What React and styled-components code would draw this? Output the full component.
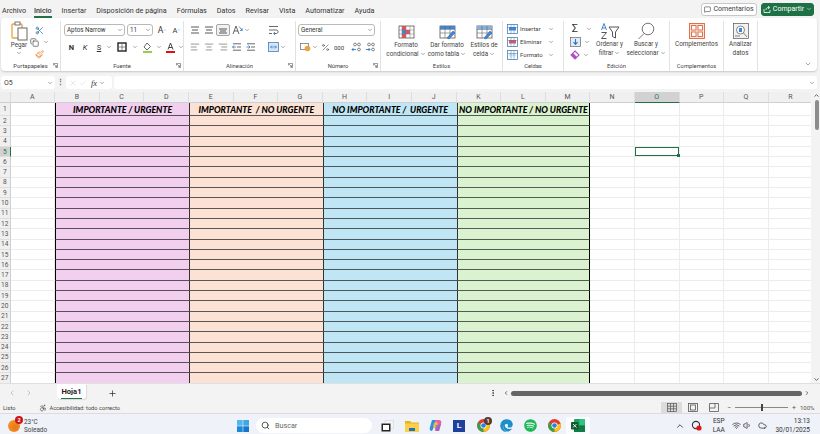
import React from 'react';
import styled, { createGlobalStyle } from 'styled-components';
import {
  ChevronDown, ChevronUp, ChevronLeft, ChevronRight, Plus, X, Check, Search,
  MessageSquare, Scissors, Copy, Paintbrush, AlignCenter, AlignLeft, AlignRight,
  Wifi, Volume1, Cloud, MoreVertical, Percent, Accessibility,
} from 'lucide-react';
import { FaSpotify, FaEdge } from 'react-icons/fa';

const GlobalStyle = createGlobalStyle`
  html, body { margin: 0; padding: 0; background: #f3f3f3; overflow: hidden; }
  * { box-sizing: border-box; }
  #root { width: 820px; height: 434px; }
`;

const Page = styled.div`
  width: 820px;
  height: 434px;
  display: flex;
  flex-direction: column;
  overflow: hidden;
  font-family: Roboto, "Noto Sans", sans-serif;
  color: #3b3b3b;
  background: #f3f3f3;
`;

const TopBar = styled.div`
  height: 18px;
  flex: none;
  display: flex;
  align-items: center;
  padding: 0 0 0 2px;
`;

const MenuItem = styled.div`
  font-size: 7.2px;
  margin-right: ${p => p.$gap || 10}px;
  height: 17px;
  line-height: 19px;
  color: #333;
  white-space: nowrap;
  border-bottom: ${p => (p.$active ? '2px solid #217346' : '2px solid transparent')};
  font-weight: ${p => (p.$active ? 500 : 400)};
`;

const TopActions = styled.div`
  margin-left: auto;
  display: flex;
  align-items: center;
  gap: 4px;
  padding-right: 6px;
`;

const CommentButton = styled.div`
  height: 13px;
  width: 56px;
  border: 1px solid #c8c8c8;
  border-radius: 3px;
  background: #fff;
  font-size: 7px;
  display: flex;
  align-items: center;
  justify-content: center;
  gap: 2px;
`;

const ShareButton = styled(CommentButton)`
  width: 53px;
  background: #1e7145;
  border-color: #1e7145;
  color: #fff;
`;

const Ribbon = styled.div`
  height: 53px;
  flex: none;
  margin: 0 3px 0 1px;
  background: #fff;
  border-radius: 4px;
  box-shadow: 0 1px 2px rgba(0, 0, 0, 0.18);
  display: flex;
  position: relative;
`;

const Group = styled.div`
  width: ${p => p.$w}px;
  flex: none;
  display: flex;
  flex-direction: column;
  margin: 3px 0 0;
  border-right: ${p => (p.$last ? 'none' : '1px solid #e2e2e2')};
`;

const GroupBody = styled.div`
  flex: 1;
  display: flex;
  padding-left: ${p => p.$pad || 0}px;
  min-height: 0;
`;

const GroupLabel = styled.div`
  height: 10px;
  font-size: 5.8px;
  line-height: 10px;
  text-align: center;
  position: relative;
  color: #444;
`;

const Launcher = styled.svg`
  position: absolute;
  right: 2px;
  top: 2px;
  width: 5px;
  height: 5px;
`;

const Col = styled.div`
  display: flex;
  flex-direction: column;
  width: ${p => (p.$w ? `${p.$w}px` : 'auto')};
  gap: ${p => p.$gap || 0}px;
  padding-top: ${p => p.$top || 0}px;
  align-items: ${p => p.$align || 'stretch'};
  flex: none;
`;

const Row = styled.div`
  display: flex;
  align-items: center;
  height: ${p => p.$h || 13}px;
  gap: ${p => p.$gap || 0}px;
  margin-left: ${p => p.$ml || 0}px;
`;

const Chev = styled(ChevronDown).attrs({ size: 6, strokeWidth: 2 })`
  color: ${p => p.$light ? '#fff' : '#555'};
  flex: none;
  margin-left: ${p => p.$ml || 0}px;
`;

const PushedChev = styled(Chev)`
  margin-left: auto;
`;

const TextChev = styled(ChevronDown).attrs({ size: 6, strokeWidth: 2 })`
  color: #555;
  display: inline-block;
  vertical-align: -1px;
  margin-left: 1px;
`;

const SelectBox = styled.div`
  width: ${p => p.$w}px;
  height: 12px;
  border: 1px solid #b9b9b9;
  border-radius: 3px;
  margin-right: ${p => p.$mr || 0}px;
  font-size: 6.3px;
  line-height: 10px;
  padding-left: 2px;
  display: flex;
  align-items: center;
  justify-content: space-between;
  padding-right: 1px;
  flex: none;
  color: #333;
`;

const Slot = styled.div`
  width: ${p => p.$w || 14}px;
  height: ${p => p.$h || 12}px;
  display: flex;
  align-items: center;
  justify-content: center;
  flex: none;
  font-size: ${p => p.$fs || 7.5}px;
  font-weight: ${p => p.$bold || 400};
  font-style: ${p => (p.$italic ? 'italic' : 'normal')};
  text-decoration: ${p => (p.$under ? 'underline' : 'none')};
  color: #333;
  border: ${p => (p.$on ? '1px solid #a5a5a5' : 'none')};
  border-radius: 2px;
  background: ${p => (p.$on ? '#f2f2f2' : 'transparent')};
`;

const BigButton = styled.div`
  width: ${p => p.$w}px;
  flex: none;
  display: flex;
  flex-direction: column;
  align-items: center;
  padding-top: ${p => p.$top ?? 2}px;
`;

const BigIcon = styled.div`
  height: 18px;
  display: flex;
  align-items: center;
  justify-content: center;
`;

const BigText = styled.div`
  font-size: 6.3px;
  line-height: 8.6px;
  text-align: center;
  white-space: nowrap;
  color: #444;
`;

const SmallAction = styled.div`
  height: 13.5px;
  display: flex;
  align-items: center;
  font-size: 6px;
  gap: 2px;
  padding-left: 3px;
  color: #444;
  white-space: nowrap;
`;

const CollapseRibbon = styled(ChevronDown).attrs({ size: 8, strokeWidth: 1.6 })`
  position: absolute;
  right: 5px;
  bottom: 3px;
  color: #555;
`;

const FormulaBar = styled.div`
  height: 13px;
  flex: none;
  margin: 5px 3px 3px 1px;
  display: flex;
  align-items: stretch;
`;

const NameBox = styled.div`
  width: 54px;
  background: #fff;
  border-radius: 3px;
  font-size: 7px;
  display: flex;
  align-items: center;
  justify-content: space-between;
  padding: 0 2px 0 3px;
`;

const Grip = styled.div`
  width: 11px;
  color: #666;
  font-size: 7px;
  font-weight: 700;
  text-align: center;
  line-height: 12px;
`;

const FxBox = styled.div`
  width: 46px;
  background: #fff;
  border-radius: 3px;
  display: flex;
  align-items: center;
  gap: 2px;
  padding-left: 3px;
  color: #bdbdbd;
`;

const Fx = styled.span`
  font-family: "Liberation Serif", serif;
  font-style: italic;
  font-size: 8.5px;
  color: #333;
  margin-left: 2px;
`;

const FormulaInput = styled.div`
  flex: 1;
  margin-left: 2px;
  background: #fff;
  border-radius: 3px;
  display: flex;
  align-items: center;
  justify-content: flex-end;
  padding-right: 2px;
`;

const Sheet = styled.div`
  height: 292px;
  flex: none;
  display: flex;
  background: #fff;
  overflow: hidden;
  border-bottom: 1px solid #e0e0e0;
`;

const SheetGrid = styled.div`
  width: 811px;
  flex: none;
  display: grid;
  grid-template-columns: 10.6px repeat(18, 44.6px);
  grid-template-rows: 11px 13px repeat(26, 10.3px);
  overflow: hidden;
`;

const Corner = styled.div`
  background: #eeeeee;
  border-right: 1px solid #dcdcdc;
  border-bottom: 1px solid #cfcfcf;
`;

const ColHead = styled.div`
  background: ${p => (p.$on ? '#d2d2d2' : '#f0f0f0')};
  border-right: 1px solid #dedede;
  border-bottom: ${p => (p.$on ? '1px solid #217346' : '1px solid #cfcfcf')};
  color: ${p => (p.$on ? '#217346' : '#555')};
  font-size: 7px;
  line-height: 11px;
  text-align: center;
`;

const RowHead = styled.div`
  background: ${p => (p.$on ? '#d2d2d2' : '#f0f0f0')};
  border-right: ${p => (p.$on ? '1px solid #217346' : '1px solid #cfcfcf')};
  border-bottom: 1px solid #dedede;
  color: ${p => (p.$on ? '#217346' : '#555')};
  font-size: 6.6px;
  display: flex;
  align-items: center;
  justify-content: center;
`;

const Cell = styled.div`
  border-right: 1px solid #ececec;
  border-bottom: 1px solid #ececec;
  position: relative;
  box-shadow: ${p => (p.$selected ? 'inset 0 0 0 1px #217346' : 'none')};
`;

const FillHandle = styled.span`
  position: absolute;
  right: -1px;
  bottom: -1px;
  width: 3px;
  height: 3px;
  background: #217346;
`;

const Quadrant = styled.div`
  grid-column: span 3;
  background: ${p => p.$bg};
  border-left: 1px solid ${p => (p.$first ? '#000' : '#333')};
  border-right: ${p => (p.$end ? '1px solid #000' : 'none')};
  border-bottom: 1px solid ${p => (p.$last ? '#000' : 'rgba(0, 0, 0, 0.62)')};
  font-family: Lato, "Liberation Sans", sans-serif;
  font-size: 8.8px;
  font-style: italic;
  font-weight: 900;
  color: #000;
  white-space: pre;
  display: flex;
  align-items: center;
  justify-content: center;
  overflow: hidden;
`;

const VScroll = styled.div`
  flex: 1;
  display: flex;
  flex-direction: column;
  align-items: center;
  background: #f3f3f3;
  color: #555;
  padding-left: 2px;
`;

const VThumb = styled.div`
  width: 4px;
  height: 30px;
  border-radius: 2px;
  background: #8c8c8c;
  margin-top: 1px;
`;

const VArrowEnd = styled(ChevronDown).attrs({ size: 7, strokeWidth: 3 })`
  margin-top: auto;
`;

const TabsBar = styled.div`
  height: 18px;
  flex: none;
  display: flex;
  align-items: center;
  color: #aaa;
  padding-left: 3px;
`;

const NavSlot = styled.div`
  width: 17px;
  display: flex;
  justify-content: center;
`;

const SheetTab = styled.div`
  margin-left: 20px;
  width: 29px;
  height: 15px;
  margin-top: -3px;
  background: #fff;
  border-radius: 0 0 3px 3px;
  box-shadow: 1px 1px 1px rgba(0, 0, 0, 0.1);
  font-size: 7.6px;
  font-weight: 700;
  color: #222;
  text-align: center;
  line-height: 15px;
  position: relative;
`;

const TabLine = styled.span`
  position: absolute;
  left: 4px;
  right: 4px;
  bottom: 0;
  height: 1.5px;
  background: #217346;
`;

const AddSheet = styled.div`
  margin-left: 22px;
  color: #333;
  display: flex;
`;

const Dots = styled.div`
  margin-left: 372px;
  color: #333;
  display: flex;
`;

const HScroll = styled.div`
  margin-left: 6px;
  width: 307px;
  display: flex;
  align-items: center;
  color: #444;
  gap: 2px;
`;

const HThumb = styled.div`
  flex: 1;
  height: 5px;
  border-radius: 3px;
  background: #666;
`;

const StatusBar = styled.div`
  height: 11px;
  flex: none;
  display: flex;
  align-items: center;
  font-size: 5.7px;
  color: #444;
  padding-left: 3px;
  background: #f3f3f3;
`;

const StatusA11y = styled.div`
  margin-left: 24px;
  display: flex;
  align-items: center;
  gap: 2px;
`;

const StatusRight = styled.div`
  margin-left: auto;
  display: flex;
  align-items: center;
  height: 100%;
  color: #555;
`;

const ViewButton = styled.div`
  width: 21px;
  height: 100%;
  display: flex;
  align-items: center;
  justify-content: center;
  background: ${p => (p.$on ? '#dcdcdc' : 'transparent')};
`;

const ZoomSign = styled.span`
  width: 6px;
  margin-left: ${p => p.$ml || 0}px;
  text-align: center;
  font-size: 7px;
`;

const ZoomTrack = styled.div`
  width: 53px;
  height: 1px;
  background: #888;
  margin: 0 3px;
  position: relative;
`;

const ZoomThumb = styled.span`
  position: absolute;
  left: 26px;
  top: -3px;
  width: 2px;
  height: 7px;
  background: #444;
`;

const ZoomPct = styled.span`
  width: 23px;
  padding-left: 3px;
  font-size: 6px;
`;

const Taskbar = styled.div`
  flex: 1;
  min-height: 0;
  display: flex;
  align-items: center;
  background: #eff2f8;
  border-top: 1px solid #dcdcdc;
  padding-top: 3px;
`;

const Weather = styled.div`
  width: 237px;
  display: flex;
  align-items: center;
  padding-left: 8px;
  gap: 4px;
  flex: none;
`;

const Sun = styled.div`
  width: 12px;
  height: 12px;
  border-radius: 50%;
  background: radial-gradient(circle at 60% 60%, #e8751a, #f7a128);
  position: relative;
`;

const Badge = styled.span`
  position: absolute;
  top: ${p => p.$top}px;
  right: ${p => p.$right}px;
  width: 8px;
  height: 8px;
  border-radius: 50%;
  background: ${p => p.$bg};
  color: #fff;
  font-size: 5.5px;
  font-weight: 700;
  text-align: center;
  line-height: 8px;
`;

const WeatherText = styled.div`
  font-size: 6.4px;
  line-height: 8px;
  color: #444;
`;

const SearchBox = styled.div`
  width: 116px;
  height: 15px;
  margin: 0 4px 0 7px;
  border-radius: 8px;
  background: #fff;
  display: flex;
  align-items: center;
  gap: 5px;
  padding-left: 5px;
  font-size: 7.2px;
  color: #666;
  flex: none;
`;

const AppSlot = styled.div`
  width: 23.8px;
  height: 18px;
  display: flex;
  align-items: center;
  justify-content: center;
  flex: none;
  position: relative;
  background: ${p => (p.$on ? '#fbfcfe' : 'transparent')};
  border-radius: 2px;
`;

const AppTile = styled.div`
  width: 12px;
  height: 12px;
  background: #1f3f9e;
  color: #fff;
  font-size: 8px;
  font-weight: 700;
  text-align: center;
  line-height: 12px;
  font-family: "Liberation Sans", sans-serif;
`;

const Tray = styled.div`
  margin-left: auto;
  display: flex;
  align-items: center;
  color: #333;
  padding-right: 10px;
`;

const TrayText = styled.div`
  font-size: ${p => p.$fs || 6.6}px;
  line-height: 9px;
  text-align: ${p => p.$align || 'center'};
  color: #333;
  margin-left: ${p => p.$ml || 0}px;
  margin-right: ${p => p.$mr || 0}px;
`;

const TraySlot = styled.div`
  width: ${p => p.$w || 14}px;
  display: flex;
  justify-content: center;
`;

const columns = 'ABCDEFGHIJKLMNOPQR'.split('');
const quadrants = [
  { bg: '#f2ceef', title: 'IMPORTANTE / URGENTE', first: true },
  { bg: '#fbe2d5', title: 'IMPORTANTE  / NO URGENTE' },
  { bg: '#c0e6f5', title: 'NO IMPORTANTE /  URGENTE' },
  { bg: '#daf2d0', title: 'NO IMPORTANTE / NO URGENTE', end: true },
];

const LaunchIcon = () => (
  <Launcher viewBox="0 0 6 6" fill="none" stroke="#666" strokeWidth="0.8">
    <path d="M0.5 3V0.5H5.5V5.5H3M1 1L4.5 4.5M4.5 2.5V4.5H2.5" />
  </Launcher>
);

const Label = ({ children, launch }) => (
  <GroupLabel>
    {children}
    {launch && <LaunchIcon />}
  </GroupLabel>
);

const Lines = ({ rows }) => (
  <svg width="10" height="8" viewBox="0 0 10 8" strokeWidth="0.9">
    {rows.map(([x1, x2, y], i) => (
      <line key={i} x1={x1} x2={x2} y1={y} y2={y} stroke="#444" />
    ))}
  </svg>
);

const PasteIcon = () => (
  <svg width="17" height="20" viewBox="0 0 17 20" fill="none">
    <rect x="1" y="3" width="10" height="14" rx="1" stroke="#e8a33d" strokeWidth="1.3" />
    <rect x="4" y="1" width="5" height="3" stroke="#777" fill="#fff" />
    <rect x="7" y="7" width="9" height="12" fill="#fff" stroke="#666" />
  </svg>
);

const TableIcon = ({ fill, brush }) => (
  <svg width="17" height="15" viewBox="0 0 17 15" fill="none">
    <rect x="1" y="1" width="15" height="12" fill="#fff" stroke="#555" strokeWidth="0.8" />
    <rect x="1" y="1" width="15" height="3" fill={fill} />
    <path d="M1 4.5H16M1 8H16M6 1V13M11 1V13" stroke="#666" strokeWidth="0.6" />
    {brush && <path d="M8 13L14 6L16 8L10 14Z" fill="#3f87d6" stroke="#2b5f9e" strokeWidth="0.5" />}
  </svg>
);

const CondIcon = () => (
  <svg width="17" height="14" viewBox="0 0 17 14" fill="none">
    <rect x="1" y="1" width="15" height="12" fill="#fff" stroke="#555" strokeWidth="0.8" />
    <rect x="4" y="1" width="4" height="4" fill="#e8505b" />
    <rect x="4" y="5" width="4" height="4" fill="#3f87d6" />
    <rect x="8" y="5" width="4" height="4" fill="#e8505b" />
    <rect x="4" y="9" width="4" height="4" fill="#e8505b" />
    <path d="M1 5H16M1 9H16M4 1V13M8 1V13M12 1V13" stroke="#777" strokeWidth="0.5" />
  </svg>
);

const AddinsIcon = () => (
  <svg width="16" height="16" viewBox="0 0 16 16" fill="none" stroke="#e0623a" strokeWidth="0.9">
    <rect x="0.5" y="0.5" width="15" height="15" fill="#fbe5dc" />
    <rect x="2.5" y="2.5" width="4.5" height="4.5" fill="#fff" />
    <rect x="9" y="2.5" width="4.5" height="4.5" fill="#fff" />
    <rect x="2.5" y="9" width="4.5" height="4.5" fill="#fff" />
    <rect x="9" y="9" width="4.5" height="4.5" fill="#fff" />
  </svg>
);

const AnalyzeIcon = () => (
  <svg width="16" height="16" viewBox="0 0 16 16" fill="none" stroke="#555" strokeWidth="0.7">
    <rect x="0.5" y="0.5" width="15" height="15" fill="#f2f2f2" />
    <circle cx="7.5" cy="7" r="4" fill="#fff" />
    <rect x="6" y="5" width="3" height="4" fill="#3f87d6" stroke="none" />
    <path d="M10.5 10L14 14M2 13H7" />
  </svg>
);

const SortIcon = () => (
  <svg width="20" height="18" viewBox="0 0 20 18" fill="none" strokeWidth="1">
    <path d="M1.5 8L4 1.5L6.5 8M2.5 6H5.5" stroke="#2f75c5" strokeWidth="0.9" />
    <path d="M1.5 10.5H6.5L1.5 16.5H6.5" stroke="#444" strokeWidth="0.9" />
    <path d="M9 5H19L15.5 10V16L12.5 14.5V10Z" stroke="#555" />
  </svg>
);

const MagnifierIcon = () => (
  <svg width="18" height="18" viewBox="0 0 18 18" fill="none" stroke="#666" strokeWidth="0.9">
    <circle cx="11" cy="7" r="5.8" />
    <path d="M7 11.5L1.5 17" />
  </svg>
);

const CellsIcon = ({ color, mark }) => (
  <svg width="11" height="10" viewBox="0 0 11 10" fill="none">
    <rect x="0.5" y="0.5" width="10" height="9" fill="#fff" stroke="#4a7fb5" strokeWidth="0.8" />
    <rect x="2" y="3" width="7" height="3.5" fill={color} />
    {mark && <path d="M0.5 3.5H10.5M4 0.5V9.5M7 0.5V9.5" stroke="#4a7fb5" strokeWidth="0.5" />}
  </svg>
);

const FillIcon = () => (
  <svg width="11" height="10" viewBox="0 0 11 10">
    <rect x="0.5" y="0.5" width="10" height="9" fill="#e3ecf6" stroke="#666" strokeWidth="0.7" />
    <path d="M5.5 2V7M3.5 5.2L5.5 7.4L7.5 5.2" stroke="#2f75c5" strokeWidth="1.1" fill="none" />
  </svg>
);

const EraserIcon = () => (
  <svg width="10" height="10" viewBox="0 0 10 10">
    <path d="M5 1L9 5L5 9L1 5Z" fill="#fff" stroke="#b04fc0" strokeWidth="1.1" />
    <path d="M3 3L7 7L5 9L1 5Z" fill="#b04fc0" />
  </svg>
);

const BorderIcon = () => (
  <svg width="10" height="10" viewBox="0 0 10 10" fill="none" stroke="#222">
    <rect x="1" y="1" width="8" height="8" strokeWidth="1.4" />
    <path d="M5 2V8M2 5H8" strokeWidth="0.5" />
  </svg>
);

const FillColorIcon = () => (
  <svg width="11" height="11" viewBox="0 0 11 11" fill="none">
    <path d="M5 1L8.5 4.5L5 8L2 5Z" stroke="#444" strokeWidth="0.8" />
    <rect x="1" y="9" width="9" height="2" fill="#92d050" />
  </svg>
);

const FontColorIcon = () => (
  <svg width="11" height="11" viewBox="0 0 11 11" fill="none">
    <path d="M3 7.5L5.5 1L8 7.5M3.8 5.5H7.2" stroke="#333" strokeWidth="0.9" />
    <rect x="1" y="9" width="9" height="2" fill="#e01010" />
  </svg>
);

const WrapIcon = () => (
  <svg width="11" height="10" viewBox="0 0 11 10" fill="none" stroke="#444" strokeWidth="0.8">
    <path d="M1 1.5H10M1 8.5H4M1 5H8.5C10.5 5 10.5 8.5 8.5 8.5H6" />
    <path d="M7 7L5.5 8.5L7 10" stroke="#2f75c5" />
  </svg>
);

const AngleIcon = () => (
  <svg width="11" height="10" viewBox="0 0 11 10" fill="none" stroke="#444" strokeWidth="0.8">
    <path d="M1 9L4 1L7 9M2 6H6" />
    <path d="M7 1.5L10 5M8 5.5H10.2V3.2" stroke="#2f75c5" />
  </svg>
);

const MergeIcon = () => (
  <svg width="11" height="10" viewBox="0 0 11 10" fill="none">
    <rect x="0.5" y="0.5" width="10" height="9" fill="#d6e6f6" stroke="#4a7fb5" strokeWidth="0.8" />
    <path d="M2.5 5H8.5M7 3.5L8.5 5L7 6.5M4 3.5L2.5 5L4 6.5" stroke="#2f75c5" strokeWidth="0.7" />
  </svg>
);

const AccountIcon = () => (
  <svg width="11" height="10" viewBox="0 0 11 10">
    <rect x="0.5" y="1.5" width="8" height="6" fill="#fff" stroke="#666" strokeWidth="0.7" />
    <circle cx="7.5" cy="6.5" r="2.8" fill="#e8a33d" />
  </svg>
);

const DecimalIcon = ({ flip }) => (
  <svg width="11" height="10" viewBox="0 0 11 10" fill="none" stroke="#555" strokeWidth="0.7">
    <circle cx="4" cy="2.5" r="1.4" />
    <circle cx="8" cy="2.5" r="1.4" />
    <circle cx="8" cy="7.5" r="1.4" />
    <path d={flip ? 'M1 7.5H5M3.5 6L5 7.5L3.5 9' : 'M1 7.5H5M2.5 6L1 7.5L2.5 9'} stroke="#2f75c5" strokeWidth="0.9" />
  </svg>
);

const IndentIcon = ({ out }) => (
  <svg width="10" height="8" viewBox="0 0 10 8" fill="none" stroke="#444" strokeWidth="0.8">
    <path d="M1 0.8H9M5 4H9M1 7.2H9" />
    <path d={out ? 'M0.5 4H4M2.5 2.5L4 4L2.5 5.5' : 'M0.5 4H4M2 2.5L0.5 4L2 5.5'} stroke="#2f75c5" />
  </svg>
);

const ShareIcon = () => (
  <svg width="8" height="8" viewBox="0 0 8 8" fill="none" stroke="#fff" strokeWidth="0.8">
    <path d="M1 4V7.5H7V5M3 5C3 3 4 2.5 6 2.5M5 1L6.8 2.5L5 4" />
  </svg>
);

const GridView = () => (
  <svg width="10" height="9" viewBox="0 0 10 9" fill="none" stroke="#555" strokeWidth="0.7">
    <rect x="0.5" y="0.5" width="9" height="8" />
    <path d="M0.5 3.2H9.5M0.5 5.8H9.5M3.5 0.5V8.5M6.5 0.5V8.5" />
  </svg>
);

const PageView = () => (
  <svg width="10" height="9" viewBox="0 0 10 9" fill="none" stroke="#555" strokeWidth="0.8">
    <rect x="0.5" y="0.5" width="9" height="8" />
    <rect x="2.5" y="2" width="5" height="5" />
  </svg>
);

const BreakView = () => (
  <svg width="10" height="9" viewBox="0 0 10 9" fill="none" stroke="#555" strokeWidth="0.8">
    <path d="M0.5 0.5H9.5V8.5H0.5ZM6 0.5V5H0.5" />
  </svg>
);

const WindowsLogo = () => (
  <svg width="12" height="12" viewBox="0 0 12 12">
    <rect width="5.7" height="5.7" fill="#52b7ee" />
    <rect x="6.3" width="5.7" height="5.7" fill="#3fa7e6" />
    <rect y="6.3" width="5.7" height="5.7" fill="#1b88d8" />
    <rect x="6.3" y="6.3" width="5.7" height="5.7" fill="#1478c9" />
  </svg>
);

const TaskViewIcon = () => (
  <svg width="13" height="12" viewBox="0 0 13 12">
    <rect x="4" y="0.5" width="8.5" height="8" fill="#f4f4f4" stroke="#cfcfcf" strokeWidth="0.5" />
    <rect x="0.5" y="3.5" width="9" height="8" fill="#fff" />
    <path d="M0.5 3.5H9.5V11.5H0.5ZM2 5V10H8V5Z" fill="#222" fillRule="evenodd" />
  </svg>
);

const FolderIcon = () => (
  <svg width="14" height="12" viewBox="0 0 14 12">
    <path d="M0 1H5L6.5 2.5H14V12H0Z" fill="#e8b320" />
    <rect y="3.5" width="14" height="8.5" fill="#fbd049" />
    <rect x="4" y="8" width="6" height="3" fill="#1f72c4" />
  </svg>
);

const CopilotIcon = () => (
  <svg width="13" height="13" viewBox="0 0 13 13">
    <path d="M3 1H7L6 6L3 12C1 12 0 10 1 8Z" fill="#2f8fe0" />
    <path d="M6 1H10C12 1 13 3 12 5L10 12H6L8 6Z" fill="#e85fa3" />
    <path d="M5 4L8 3L10 7L7 10L4 8Z" fill="#f5b942" />
    <path d="M7 6L12 5L10 12L6 11Z" fill="#8a5fd6" opacity="0.75" />
  </svg>
);

const ChromeIcon = () => (
  <svg width="13" height="13" viewBox="0 0 13 13">
    <circle cx="6.5" cy="6.5" r="6.5" fill="#e33b2e" />
    <path d="M6.5 6.5L1 3.5A6.5 6.5 0 0 0 6.5 13Z" fill="#2ea44f" />
    <path d="M6.5 6.5L12.6 4.5A6.5 6.5 0 0 1 6.5 13Z" fill="#f5c518" />
    <circle cx="6.5" cy="6.5" r="3" fill="#fff" />
    <circle cx="6.5" cy="6.5" r="2.3" fill="#2f7ee0" />
  </svg>
);

const ExcelIcon = () => (
  <svg width="14" height="13" viewBox="0 0 14 13">
    <rect x="3" y="0" width="11" height="13" rx="1" fill="#21a366" />
    <rect x="8.5" y="0" width="5.5" height="6.5" fill="#33c481" />
    <rect x="3" y="6.5" width="11" height="6.5" fill="#107c41" />
    <rect x="0" y="3" width="7.5" height="7.5" rx="0.8" fill="#0e5c2f" />
    <path d="M2 5L5.5 8.5M5.5 5L2 8.5" stroke="#fff" strokeWidth="0.9" />
  </svg>
);

const EarthBlock = () => (
  <svg width="11" height="11" viewBox="0 0 11 11" fill="none">
    <circle cx="5" cy="5" r="3.6" stroke="#333" strokeWidth="1.1" />
    <circle cx="8" cy="8" r="2.6" fill="#e01515" />
  </svg>
);

const App = () => (
  <Page>
    <GlobalStyle />
    <TopBar>
      <MenuItem $gap={8}>Archivo</MenuItem>
      <MenuItem $gap={10} $active>Inicio</MenuItem>
      <MenuItem $gap={10}>Insertar</MenuItem>
      <MenuItem $gap={10}>Disposición de página</MenuItem>
      <MenuItem $gap={10}>Fórmulas</MenuItem>
      <MenuItem $gap={10}>Datos</MenuItem>
      <MenuItem $gap={10}>Revisar</MenuItem>
      <MenuItem $gap={10}>Vista</MenuItem>
      <MenuItem $gap={10}>Automatizar</MenuItem>
      <MenuItem>Ayuda</MenuItem>
      <TopActions>
        <CommentButton><MessageSquare size={7} />Comentarios</CommentButton>
        <ShareButton><ShareIcon />Compartir<Chev $light /></ShareButton>
      </TopActions>
    </TopBar>

    <Ribbon>
      <Group $w={60}>
        <GroupBody $pad={8}>
          <BigButton $w={20} $top={0}>
            <PasteIcon />
            <BigText>Pegar</BigText>
            <Chev />
          </BigButton>
          <Col $w={20} $top={2} $align="center">
            <Slot $h={14}><Scissors size={9} color="#2f6fb0" /></Slot>
            <Row $h={12}><Copy size={9} color="#555" /><Chev $ml={4} /></Row>
            <Slot $h={14}><Paintbrush size={9} color="#e8832a" /></Slot>
          </Col>
        </GroupBody>
        <Label launch>Portapapeles</Label>
      </Group>

      <Group $w={123}>
        <GroupBody $pad={3}>
          <Col $top={3} $gap={4}>
            <Row $h={12}>
              <SelectBox $w={61} $mr={2}>Aptos Narrow<Chev /></SelectBox>
              <SelectBox $w={26} $mr={2}>11<Chev /></SelectBox>
              <Slot $fs={8.5} $w={15}>A<ChevronUp size={4} color="#2f75c5" /></Slot>
              <Slot $fs={7.5}>A<ChevronDown size={4} color="#2f75c5" /></Slot>
            </Row>
            <Row $h={14} $ml={1}>
              <Slot $bold={700} $w={13}>N</Slot>
              <Slot $italic $w={14}>K</Slot>
              <Slot $under $w={14}>S</Slot>
              <Chev />
              <Slot $w={20}><BorderIcon /></Slot>
              <Chev />
              <Slot $w={18}><FillColorIcon /></Slot>
              <Chev />
              <Slot $w={16}><FontColorIcon /></Slot>
              <Chev />
            </Row>
          </Col>
        </GroupBody>
        <Label launch>Fuente</Label>
      </Group>

      <Group $w={112}>
        <GroupBody $pad={4}>
          <Col $top={3} $gap={4}>
            <Row $h={12}>
              <Slot><Lines rows={[[1, 9, 1], [2, 8, 4], [1, 9, 7]]} /></Slot>
              <Slot><Lines rows={[[1, 9, 1], [2, 8, 4], [1, 9, 7]]} /></Slot>
              <Slot $on><Lines rows={[[1, 9, 3], [2, 8, 5], [1, 9, 7]]} /></Slot>
              <Slot><AngleIcon /></Slot>
              <Chev />
            </Row>
            <Row $h={14}>
              <Slot><AlignLeft size={10} strokeWidth={1.2} /></Slot>
              <Slot><AlignCenter size={10} strokeWidth={1.2} /></Slot>
              <Slot><AlignRight size={10} strokeWidth={1.2} /></Slot>
              <Slot><IndentIcon /></Slot>
              <Slot><IndentIcon out /></Slot>
            </Row>
          </Col>
          <Col $top={3} $gap={4}>
            <Row $h={12} $ml={8}><Slot><WrapIcon /></Slot></Row>
            <Row $h={14} $ml={8}><Slot><MergeIcon /></Slot><Chev /></Row>
          </Col>
        </GroupBody>
        <Label launch>Alineación</Label>
      </Group>

      <Group $w={85}>
        <GroupBody $pad={2}>
          <Col $top={3} $gap={4}>
            <SelectBox $w={77}>General<Chev /></SelectBox>
            <Row $h={14}>
              <Slot><AccountIcon /></Slot>
              <Chev />
              <Slot><Percent size={9} strokeWidth={1.4} /></Slot>
              <Slot $fs={6}>000</Slot>
              <Slot $w={3}></Slot>
              <Slot><DecimalIcon /></Slot>
              <Slot><DecimalIcon flip /></Slot>
            </Row>
          </Col>
        </GroupBody>
        <Label launch>Número</Label>
      </Group>

      <Group $w={122}>
        <GroupBody $pad={3}>
          <BigButton $w={44}>
            <BigIcon><CondIcon /></BigIcon>
            <BigText>Formato<br />condicional<TextChev /></BigText>
          </BigButton>
          <BigButton $w={38}>
            <BigIcon><TableIcon fill="#3f87d6" brush /></BigIcon>
            <BigText>Dar formato<br />como tabla<TextChev /></BigText>
          </BigButton>
          <BigButton $w={36}>
            <BigIcon><TableIcon fill="#7fb2e5" brush /></BigIcon>
            <BigText>Estilos de<br />celda<TextChev /></BigText>
          </BigButton>
        </GroupBody>
        <Label>Estilos</Label>
      </Group>

      <Group $w={61}>
        <GroupBody $pad={1}>
          <Col $top={1} $w={50}>
            <SmallAction><CellsIcon color="#3f87d6" mark />Insertar<PushedChev /></SmallAction>
            <SmallAction><CellsIcon color="#e8505b" mark />Eliminar<PushedChev /></SmallAction>
            <SmallAction><CellsIcon color="#d6e6f6" mark />Formato<PushedChev /></SmallAction>
          </Col>
        </GroupBody>
        <Label>Celdas</Label>
      </Group>

      <Group $w={106}>
        <GroupBody $pad={3}>
          <Col $top={1} $w={26}>
            <SmallAction>
              <Slot $w={10} $fs={11}>Σ</Slot><Chev $ml={4} />
            </SmallAction>
            <SmallAction><FillIcon /><Chev $ml={1} /></SmallAction>
            <SmallAction><EraserIcon /><Chev $ml={1} /></SmallAction>
          </Col>
          <BigButton $w={33} $top={1}>
            <BigIcon><SortIcon /></BigIcon>
            <BigText>Ordenar y<br />filtrar<TextChev /></BigText>
          </BigButton>
          <BigButton $w={40} $top={1}>
            <BigIcon><MagnifierIcon /></BigIcon>
            <BigText>Buscar y<br />seleccionar<TextChev /></BigText>
          </BigButton>
        </GroupBody>
        <Label>Edición</Label>
      </Group>

      <Group $w={54}>
        <GroupBody>
          <BigButton $w={53} $top={1}>
            <BigIcon><AddinsIcon /></BigIcon>
            <BigText>Complementos</BigText>
          </BigButton>
        </GroupBody>
        <Label>Complementos</Label>
      </Group>

      <Group $w={34}>
        <GroupBody>
          <BigButton $w={33} $top={1}>
            <BigIcon><AnalyzeIcon /></BigIcon>
            <BigText>Analizar<br />datos</BigText>
          </BigButton>
        </GroupBody>
      </Group>
      <CollapseRibbon />
    </Ribbon>

    <FormulaBar>
      <NameBox>O5<Chev /></NameBox>
      <Grip>⋮</Grip>
      <FxBox>
        <X size={8} strokeWidth={1} />
        <Check size={8} strokeWidth={1} />
        <Fx>fx</Fx>
        <Chev />
      </FxBox>
      <FormulaInput><Chev /></FormulaInput>
    </FormulaBar>

    <Sheet>
      <SheetGrid>
        <Corner />
        {columns.map(c => <ColHead key={c} $on={c === 'O'}>{c}</ColHead>)}
        {Array.from({ length: 27 }, (_, i) => i + 1).map(r => (
          <React.Fragment key={r}>
            <RowHead $on={r === 5}>{r}</RowHead>
            <Cell />
            {quadrants.map((q, i) => (
              <Quadrant key={i} $bg={q.bg} $first={q.first} $end={q.end} $last={r === 27}>
                {r === 1 ? q.title : ''}
              </Quadrant>
            ))}
            {['N', 'O', 'P', 'Q', 'R'].map(c => {
              const selected = c === 'O' && r === 5;
              return <Cell key={c} $selected={selected}>{selected && <FillHandle />}</Cell>;
            })}
          </React.Fragment>
        ))}
      </SheetGrid>
      <VScroll>
        <ChevronUp size={7} strokeWidth={3} />
        <VThumb />
        <VArrowEnd />
      </VScroll>
    </Sheet>

    <TabsBar>
      <NavSlot><ChevronLeft size={8} /></NavSlot>
      <NavSlot><ChevronRight size={8} /></NavSlot>
      <SheetTab>Hoja1<TabLine /></SheetTab>
      <AddSheet><Plus size={9} /></AddSheet>
      <Dots><MoreVertical size={8} strokeWidth={2.5} /></Dots>
      <HScroll>
        <ChevronLeft size={6} strokeWidth={3} />
        <HThumb />
        <ChevronRight size={6} strokeWidth={3} />
      </HScroll>
    </TabsBar>

    <StatusBar>
      Listo
      <StatusA11y><Accessibility size={8} />Accesibilidad: todo correcto</StatusA11y>
      <StatusRight>
        <ViewButton $on><GridView /></ViewButton>
        <ViewButton><PageView /></ViewButton>
        <ViewButton><BreakView /></ViewButton>
        <ZoomSign $ml={2}>−</ZoomSign>
        <ZoomTrack><ZoomThumb /></ZoomTrack>
        <ZoomSign>+</ZoomSign>
        <ZoomPct>100%</ZoomPct>
      </StatusRight>
    </StatusBar>

    <Taskbar>
      <Weather>
        <Sun><Badge $top={-4} $right={-3} $bg="#c9141a">2</Badge></Sun>
        <WeatherText>23°C<br />Soleado</WeatherText>
      </Weather>
      <WindowsLogo />
      <SearchBox><Search size={9} color="#222" />Buscar</SearchBox>
      <AppSlot><TaskViewIcon /></AppSlot>
      <AppSlot><FolderIcon /></AppSlot>
      <AppSlot><CopilotIcon /></AppSlot>
      <AppSlot><AppTile>L</AppTile></AppSlot>
      <AppSlot><ChromeIcon /><Badge $top={0} $right={3} $bg="#5b3a2e">1</Badge></AppSlot>
      <AppSlot><FaEdge size={13} color="#1a8fc9" /></AppSlot>
      <AppSlot><FaSpotify size={13} color="#1db954" /></AppSlot>
      <AppSlot><ChromeIcon /></AppSlot>
      <AppSlot $on><ExcelIcon /></AppSlot>
      <Tray>
        <TraySlot><ChevronUp size={10} /></TraySlot>
        <TraySlot $w={20}><EarthBlock /></TraySlot>
        <TrayText $ml={6} $mr={6}>ESP<br />LAA</TrayText>
        <TraySlot $w={11}><Wifi size={9} /></TraySlot>
        <TraySlot $w={12}><Volume1 size={9} /></TraySlot>
        <TraySlot $w={17}><Cloud size={9} /></TraySlot>
        <TrayText $align="right" $ml={4.5} $fs={6.5}>13:13<br />30/01/2025</TrayText>
      </Tray>
    </Taskbar>
  </Page>
);

export default App;
